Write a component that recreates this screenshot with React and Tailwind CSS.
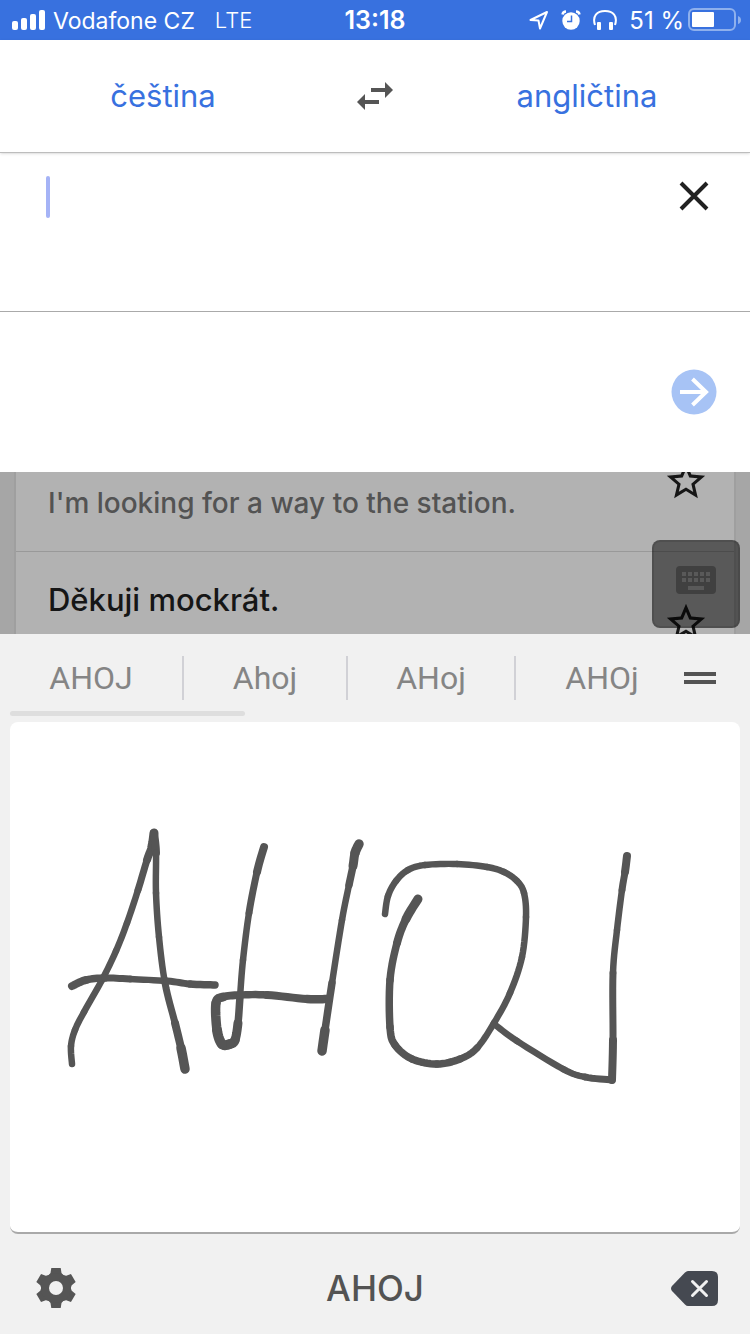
import { useState } from 'react';

const suggestions = [
  { text: 'AHOJ', className: 'w-[184px] border-r-2' },
  { text: 'Ahoj', className: 'w-[164px] border-r-2' },
  { text: 'AHoj', className: 'w-[168px] border-r-2' },
  { text: 'AHOj', className: 'w-[168px] pl-1' },
];

// every ink point is [x, y, pen width]
const strokes = [
  [[72, 1064, 6], [71, 1046, 6], [75, 1030, 6], [84, 1012, 6], [102, 980, 6], [116, 951, 6], [127, 923, 6], [138, 890, 6], [147, 860, 7], [152, 846, 8], [154, 833, 9]],
  [[154, 833, 9], [156, 853, 6], [156, 893, 6], [159, 937, 6], [165, 983, 6], [175, 1023, 7], [181, 1048, 8], [185, 1069, 10]],
  [[72, 986, 8], [86, 980, 7], [105, 978, 7], [130, 979, 6], [167, 981, 6], [190, 984, 7], [215, 985, 7]],
  [[264, 847, 8], [257, 872, 7], [249, 913, 6], [243, 960, 6], [240, 997, 6], [238, 1023, 8], [235, 1040, 9], [230, 1044, 9], [222, 1044, 10], [217, 1030, 9], [216, 1003, 9], [223, 997, 8], [240, 995, 7], [267, 995, 7], [307, 999, 8], [328, 999, 8]],
  [[359, 844, 9], [355, 853, 9], [353, 866, 8], [349, 885, 6], [342, 920, 6], [332, 983, 6], [325, 1030, 8], [322, 1051, 10]],
  [[385, 914, 6], [388, 896, 6], [396, 881, 6], [408, 870, 6], [425, 865, 6], [457, 864, 6], [487, 867, 6], [504, 872, 6], [517, 881, 6], [524, 893, 6], [526, 917, 6], [522, 957, 6], [510, 993, 6], [494, 1023, 6], [477, 1048, 6], [460, 1059, 7], [437, 1064, 7], [412, 1059, 7], [395, 1045, 7], [390, 1027, 7], [390, 980, 7], [397, 943, 7], [406, 919, 8], [418, 899, 9]],
  [[494, 1024, 6], [517, 1041, 6], [563, 1069, 6], [585, 1077, 6], [612, 1080, 7]],
  [[612, 1080, 8], [613, 1040, 7], [613, 973, 6], [617, 930, 6], [622, 890, 6], [625, 872, 7], [627, 856, 8]],
];

const spline = (a, b, c, d, t) =>
  0.5 * (2 * b + (c - a) * t + (2 * a - 5 * b + 4 * c - d) * t * t + (3 * b - a - 3 * c + d) * t * t * t);

function Stroke({ points }) {
  const steps = 8;
  return points.slice(0, -1).map((b, i) => {
    const a = points[i - 1] || b;
    const c = points[i + 1];
    const d = points[i + 2] || c;
    const line = [];
    for (let s = 0; s <= steps; s++) {
      const t = s / steps;
      line.push(`${spline(a[0], b[0], c[0], d[0], t)},${spline(a[1], b[1], c[1], d[1], t)}`);
    }
    return <polyline key={i} points={line.join(' ')} strokeWidth={(b[2] + c[2]) / 2 + 0.5} />;
  });
}

function StatusBar() {
  return (
    <div className="grid h-10 grid-cols-[1fr_auto_1fr] items-center bg-[#3871df] px-3 text-2xl text-white">
      <div className="flex items-center">
        <svg className="mr-2 h-5 w-[33px]" viewBox="0 0 33 20" fill="currentColor">
          <rect x="0" y="11" width="6" height="9" rx="2" />
          <rect x="9" y="8" width="6" height="12" rx="2" />
          <rect x="18" y="4" width="6" height="16" rx="2" />
          <rect x="27" y="0" width="6" height="20" rx="2" />
        </svg>
        <span className="pt-0.5 text-[23px]">Vodafone CZ</span>
        <span className="ml-5 pt-0.5 text-[22px] font-light">LTE</span>
      </div>
      <span className="pt-0.5 text-[25px] font-semibold">13:18</span>
      <div className="-mr-1 flex items-center justify-end">
        <svg className="mr-3 h-5 w-5" viewBox="0 0 20 20" fill="none" stroke="currentColor" strokeWidth="2" strokeLinejoin="round">
          <path d="M1.500 10 18 2 11 18.500 9.500 10.500Z" />
        </svg>
        <svg className="mr-3 h-5 w-5" viewBox="0 0 20 20">
          <circle cx="10" cy="11" r="8.700" fill="currentColor" />
          <path d="M1.500 4.500Q2 1.500 5 1.500M15 1.500Q18 1.500 18.500 4.500" fill="none" stroke="currentColor" strokeWidth="2.500" />
          <path d="M10.500 5.500V11.500H6" fill="none" stroke="#3871df" strokeWidth="1.500" />
        </svg>
        <svg className="mr-3 h-5 w-6" viewBox="0 0 24 20">
          <path d="M2 15C-1 6 4 1 12 1S25 6 22 15" fill="none" stroke="currentColor" strokeWidth="2" />
          <rect x="4" y="12" width="4" height="8" rx="1" fill="currentColor" />
          <rect x="16" y="12" width="4" height="8" rx="1" fill="currentColor" />
        </svg>
        <span className="pt-0.5">51 %</span>
        <svg className="ml-1 h-6 w-[54px]" viewBox="0 0 54 24">
          <rect x="1" y="1" width="46" height="21" rx="5" fill="none" stroke="#8eb0ed" strokeWidth="2" />
          <rect x="4" y="4" width="22" height="15" rx="1" fill="#fff" />
          <path d="M50 8Q53 9 53 12T50 16Z" fill="#8eb0ed" />
        </svg>
      </div>
    </div>
  );
}

function StarButton() {
  return (
    <button aria-label="Save" className="shrink-0 text-[#161616]">
      <svg className="h-[46px] w-[46px]" viewBox="0 0 24 24" fill="currentColor">
        <path d="M22 9.240l-7.190-.620L12 2 9.190 8.630 2 9.240l5.460 4.730L5.820 21 12 17.270 18.180 21l-1.630-7.030L22 9.240zM12 15.400l-3.760 2.270 1-4.280-3.320-2.880 4.380-.380L12 6.100l1.710 4.040 4.380.380-3.320 2.880 1 4.280L12 15.400z" />
      </svg>
    </button>
  );
}

function History() {
  return (
    <div className="relative h-[162px] overflow-hidden bg-[#a6a6a6] px-[14px]">
      <ul className="-mt-[62px] border-x-2 border-[#9f9f9f] bg-[#b2b2b2]">
        <li className="flex h-[142px] items-center justify-between border-b border-[#999] pr-[25px] pl-8">
          <p className="self-end pb-7 text-[28px] leading-10 font-medium text-[#535353]">I'm looking for a way to the station.</p>
          <StarButton />
        </li>
        <li className="flex h-[142px] items-center justify-between pr-[25px] pl-8">
          <p className="self-start pt-7 text-[31px] leading-10 font-medium text-[#161616]">Děkuji mockrát.</p>
          <StarButton />
        </li>
      </ul>
      <button
        aria-label="Keyboard"
        className="absolute right-[10px] bottom-[6px] flex h-[88px] w-[88px] items-center justify-center rounded-lg border-2 border-black/10 bg-black/50"
      >
        <svg className="-mt-2 h-7 w-10" viewBox="0 0 40 28">
          <rect width="40" height="28" rx="4" fill="#404040" />
          <path d="M6 8h28M6 14h28" stroke="#595959" strokeWidth="4" strokeDasharray="4 2" />
          <path d="M12 22h16" stroke="#595959" strokeWidth="4" />
        </svg>
      </button>
    </div>
  );
}

export default function App() {
  const [text, setText] = useState('');

  return (
    <div className="flex min-h-screen flex-col bg-white font-['Inter','Liberation_Sans',sans-serif]">
      <StatusBar />

      {/* Languages */}
      <div className="grid h-[113px] grid-cols-[1fr_98px_1fr] items-center border-b border-[#bdbdbd] text-[31px] text-[#3871df] shadow-sm">
        <button className="h-full">čeština</button>
        <button aria-label="Swap languages" className="flex justify-center text-[#555]">
          <svg className="h-7 w-9" viewBox="0 0 36 28" fill="currentColor">
            <path d="M14 6H28V0L36 8 28 16V10H14ZM22 18H8V12L0 20 8 28V22H22Z" />
          </svg>
        </button>
        <button className="h-full">angličtina</button>
      </div>

      {/* Source text */}
      <div className="flex h-[159px] items-start border-b border-[#aaa] pt-[23px] pr-[34px] pl-[46px]">
        <span className="h-[42px] w-1 shrink-0 rounded-sm bg-[#a5b3f6]" />
        <textarea
          aria-label="Source text"
          value={text}
          onChange={(e) => setText(e.target.value)}
          className="h-[120px] min-w-0 flex-1 resize-none text-[32px] outline-none"
        />
        <button aria-label="Clear" className="p-1 text-[#212121]">
          <svg className="h-8 w-9" viewBox="0 0 36 32" fill="none" stroke="currentColor" strokeWidth="4">
            <path d="M5 3 31 29M31 3 5 29" />
          </svg>
        </button>
      </div>

      <div className="flex h-[160px] items-center justify-end pr-[33px]">
        <button aria-label="Translate">
          <svg className="h-[46px] w-[46px]" viewBox="0 0 46 46">
            <circle cx="23" cy="23" r="22.500" fill="#a7c3f5" />
            <path d="M9 23H35M21.500 10 35 23 21.500 36" fill="none" stroke="#fff" strokeWidth="4" />
          </svg>
        </button>
      </div>

      <History />

      {/* Handwriting keyboard */}
      <div className="flex flex-1 flex-col bg-[#f1f1f1] px-[10px]">
        <div className="-mx-[10px] flex h-[77px] items-center pt-[11px]">
          {suggestions.map((item) => (
            <button
              key={item.text}
              className={`${item.className} h-11 border-[#d1d1d6] text-[32px] leading-8 text-[#858585] font-['Roboto',sans-serif]`}
            >
              {item.text}
            </button>
          ))}
          <button aria-label="More" className="flex h-11 flex-1 items-center">
            <span className="h-3 w-8 border-y-4 border-[#535353]" />
          </button>
        </div>
        <div className="mb-[6px] h-[5px] w-[235px] rounded-full bg-[#dedede]" />

        <div className="h-[512px] overflow-hidden rounded-lg border-b-2 border-[#a9a9a9] bg-white">
          <svg className="h-full w-full" viewBox="10 722 730 510" fill="none" stroke="#555" strokeLinecap="round" strokeLinejoin="round">
            {strokes.map((points, i) => (
              <Stroke key={i} points={points} />
            ))}
          </svg>
        </div>

        <div className="grid h-[100px] grid-cols-[1fr_auto_1fr] items-center px-[22px] pt-2">
          <button aria-label="Settings" className="justify-self-start">
            <svg className="h-12 w-12" viewBox="-24 -24 48 48" fill="#555">
              {[0, 60, 120, 180, 240, 300].map((angle) => (
                <path key={angle} transform={`rotate(${angle})`} d="M-4.700-20H4.700L5.500-15 8-12V-5H-8V-12L-5.500-15Z" />
              ))}
              <circle r="15" />
              <circle r="7" fill="#f1f1f1" />
            </svg>
          </button>
          <button className="text-[35px] font-medium text-[#535353]">AHOJ</button>
          <button aria-label="Delete" className="justify-self-end">
            <svg className="h-9 w-12" viewBox="0 0 48 36">
              <path d="M18 1H42Q48 1 48 7V30Q48 36 42 36H18Q16.500 36 15 34.500L2 21Q0 18.500 2 16L15 2.500Q16.500 1 18 1Z" fill="#454951" />
              <path d="M22.500 11.500 36.500 25.500M36.500 11.500 22.500 25.500" stroke="#f1f1f1" strokeWidth="3" strokeLinecap="round" />
            </svg>
          </button>
        </div>
      </div>
    </div>
  );
}
